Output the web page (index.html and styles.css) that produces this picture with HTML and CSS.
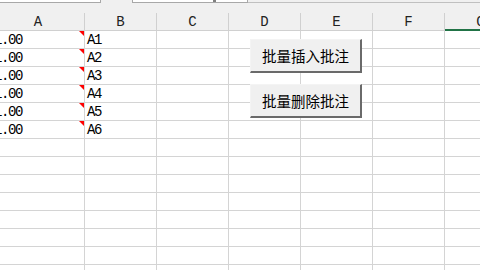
FILE: index.html
```html
<!DOCTYPE html>
<html lang="zh">
<head>
<meta charset="utf-8">
<link rel="stylesheet" href="styles.css">
</head>
<body>
<div class="app">
  <div class="topbar">
    <div class="namebox"></div>
    <div class="fxbox"><span class="mark"></span></div>
    <div class="rest"></div>
  </div>
  <div class="sheet">
    <div class="hd">A</div><div class="hd">B</div><div class="hd">C</div><div class="hd">D</div><div class="hd">E</div><div class="hd">F</div><div class="hd sel">G</div>

    <div class="c cm">1.00</div><div class="c">A1</div><div class="c"></div><div class="c"></div><div class="c"></div><div class="c"></div><div class="c"></div>
    <div class="c cm">1.00</div><div class="c">A2</div><div class="c"></div><div class="c"></div><div class="c"></div><div class="c"></div><div class="c"></div>
    <div class="c cm">1.00</div><div class="c">A3</div><div class="c"></div><div class="c"></div><div class="c"></div><div class="c"></div><div class="c"></div>
    <div class="c cm">1.00</div><div class="c">A4</div><div class="c"></div><div class="c"></div><div class="c"></div><div class="c"></div><div class="c"></div>
    <div class="c cm">1.00</div><div class="c">A5</div><div class="c"></div><div class="c"></div><div class="c"></div><div class="c"></div><div class="c"></div>
    <div class="c cm">1.00</div><div class="c">A6</div><div class="c"></div><div class="c"></div><div class="c"></div><div class="c"></div><div class="c"></div>
    <div class="c"></div><div class="c"></div><div class="c"></div><div class="c"></div><div class="c"></div><div class="c"></div><div class="c"></div>
    <div class="c"></div><div class="c"></div><div class="c"></div><div class="c"></div><div class="c"></div><div class="c"></div><div class="c"></div>
    <div class="c"></div><div class="c"></div><div class="c"></div><div class="c"></div><div class="c"></div><div class="c"></div><div class="c"></div>
    <div class="c"></div><div class="c"></div><div class="c"></div><div class="c"></div><div class="c"></div><div class="c"></div><div class="c"></div>
    <div class="c"></div><div class="c"></div><div class="c"></div><div class="c"></div><div class="c"></div><div class="c"></div><div class="c"></div>
    <div class="c"></div><div class="c"></div><div class="c"></div><div class="c"></div><div class="c"></div><div class="c"></div><div class="c"></div>
    <div class="c"></div><div class="c"></div><div class="c"></div><div class="c"></div><div class="c"></div><div class="c"></div><div class="c"></div>
    <div class="c"></div><div class="c"></div><div class="c"></div><div class="c"></div><div class="c"></div><div class="c"></div><div class="c"></div>

    <button class="btn btn-insert">批量插入批注</button>
    <button class="btn btn-delete">批量删除批注</button>
  </div>
</div>
</body>
</html>
```
FILE: styles.css
```css
html, body {
  margin: 0;
  padding: 0;
  background: #ffffff;
}
.app {
  width: 480px;
  height: 270px;
  overflow: hidden;
  background: #ffffff;
}
.topbar {
  height: 13px;
  background: #f0f0f0;
  display: flex;
  align-items: flex-start;
}
.namebox {
  width: 100px;
  height: 2px;
  background: #ffffff;
  border-right: 1px solid #a8a8a8;
  border-bottom: 1px solid #a8a8a8;
}
.fxbox {
  position: relative;
  margin-left: 31px;
  width: 114px;
  height: 2px;
  background: #ffffff;
  border-left: 1px solid #a8a8a8;
  border-right: 1px solid #a8a8a8;
  border-bottom: 1px solid #a8a8a8;
}
.mark {
  position: absolute;
  left: 80px;
  top: 0;
  width: 3px;
  height: 2px;
  background: #808080;
}
.rest {
  flex: 1;
  height: 2px;
  border-bottom: 1px solid #c0c0c0;
}
.sheet {
  position: relative;
  margin-left: -8px;
  display: grid;
  grid-template-columns: 93px repeat(6, 72px);
  grid-auto-rows: 18px;
  font-family: "Liberation Mono", "DejaVu Sans Mono", monospace;
  font-size: 14px;
  color: #000000;
}
.hd {
  box-sizing: border-box;
  background: #f0f0f0;
  border-right: 1px solid #d0d0d0;
  border-bottom: 1px solid #d0d0d0;
  text-align: center;
  line-height: 19px;
  color: #222222;
}
.hd.sel {
  border-bottom: 2px solid #217346;
}
.c {
  position: relative;
  box-sizing: border-box;
  border-right: 1px solid #d4d4d4;
  border-bottom: 1px solid #d4d4d4;
  padding-left: 2px;
  line-height: 19px;
  letter-spacing: -1.4px;
  white-space: nowrap;
  overflow: hidden;
}
.cm::after {
  content: "";
  position: absolute;
  right: 0;
  top: 0;
  width: 0;
  height: 0;
  border-top: 5px solid #ff0000;
  border-left: 5px solid transparent;
}
.btn {
  position: absolute;
  left: 258px;
  width: 112px;
  height: 34px;
  box-sizing: border-box;
  margin: 0;
  padding: 0;
  background: #f0f0f0;
  border-top: 1px solid #f4f4f4;
  border-left: 1px solid #f4f4f4;
  border-right: 2px solid #6a6a6a;
  border-bottom: 2px solid #6a6a6a;
  font-family: "Noto Sans CJK SC", "Noto Sans", sans-serif;
  font-size: 14.5px;
  color: #000000;
  text-align: center;
}
.btn-insert {
  top: 26px;
}
.btn-delete {
  top: 71px;
}
```
